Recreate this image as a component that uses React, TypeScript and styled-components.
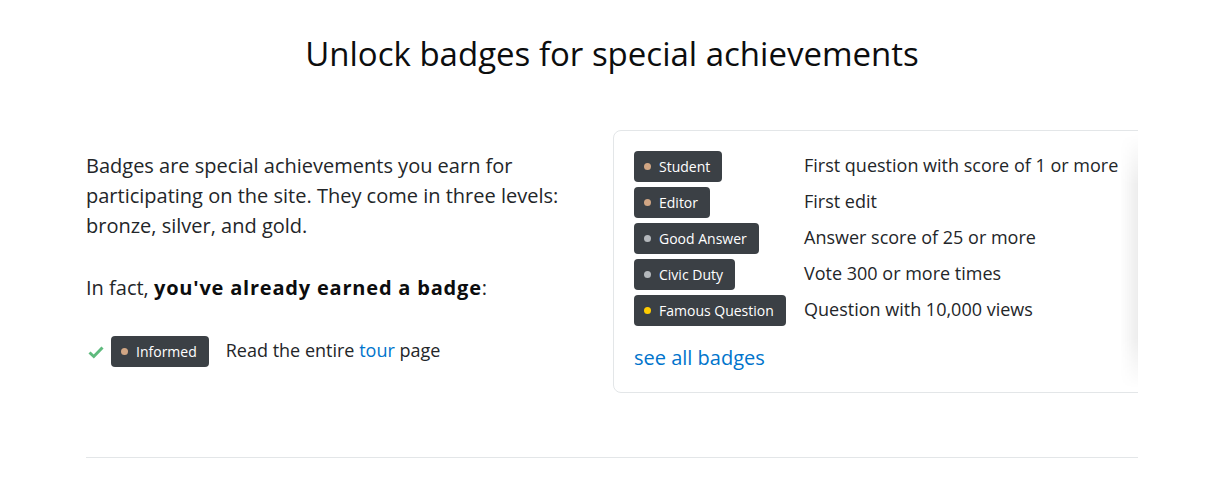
import React from "react";
import styled, { createGlobalStyle } from "styled-components";

const Global = createGlobalStyle`
  html, body { margin: 0; padding: 0; background: #fff; }
  body { font-family: "Open Sans", "Noto Sans", Arial, sans-serif; color: #232629; }
  * { box-sizing: border-box; }
`;

const Page = styled.div`
  width: 1052px;
  margin-left: 86px;
  padding-top: 29px;
`;

const Title = styled.h1`
  margin: 0;
  text-align: center;
  font-size: 33px;
  font-weight: 400;
  line-height: 50px;
  color: #0c0d0e;
`;

const Section = styled.section`
  display: grid;
  grid-template-columns: 527px 1fr;
  align-items: start;
  margin-top: 51px;
  padding-bottom: 64px;
  border-bottom: 1px solid #e3e6e8;
`;

const Intro = styled.div`
  padding: 21px 40px 0 0;
`;

const Para = styled.p`
  margin: 0 0 32px;
  font-size: 20px;
  line-height: 30px;
  color: #232629;
  &:last-of-type { margin-bottom: 33px; }
  b { font-weight: 700; color: #0c0d0e; letter-spacing: 0.8px; }
`;

const EarnedRow = styled.div`
  display: flex;
  align-items: center;
  height: 31px;
  font-size: 18px;
  color: #232629;
`;

const Check = styled.svg`
  width: 16px;
  height: 14px;
  margin-left: 2px;
  margin-right: 7px;
  flex: none;
`;

const Badge = styled.span`
  display: inline-flex;
  align-items: center;
  height: 31px;
  padding: 0 12px 0 10px;
  border-radius: 4px;
  background: #3b4045;
  color: #fff;
  font-size: 14px;
  white-space: nowrap;
  justify-self: start;
`;

const Dot = styled.span<{ $c: string }>`
  width: 7px;
  height: 7px;
  border-radius: 50%;
  background: ${(p) => p.$c};
  margin-right: 8px;
  flex: none;
`;

const EarnedText = styled.span`
  margin-left: 17px;
  padding-bottom: 3px;
`;

const Link = styled.a`
  color: #0074cc;
  text-decoration: none;
`;

const CardWrap = styled.div`
  position: relative;
  overflow: hidden;
`;

const Card = styled.div`
  width: calc(100% + 40px);
  border: 1px solid #e3e6e8;
  border-radius: 8px;
  padding: 20px 20px 21px 20px;
`;

const Fade = styled.div`
  position: absolute;
  top: 4px;
  bottom: 4px;
  right: 0;
  width: 18px;
  background: linear-gradient(to right, rgba(0, 0, 0, 0), rgba(0, 0, 0, 0.07));
  -webkit-mask-image: linear-gradient(to bottom, transparent, #000 20%, #000 80%, transparent);
  mask-image: linear-gradient(to bottom, transparent, #000 20%, #000 80%, transparent);
`;

const List = styled.div`
  display: grid;
  grid-template-columns: 170px 1fr;
  row-gap: 5px;
  align-items: center;
`;

const Desc = styled.span`
  font-size: 18px;
  color: #232629;
  white-space: nowrap;
  padding-bottom: 4px;
`;

const AllLink = styled(Link)`
  display: block;
  margin-top: 19px;
  font-size: 20px;
  line-height: 26px;
`;

const BRONZE = "#d1a684";
const SILVER = "#b4b8bc";
const GOLD = "#ffcc01";

const badges = [
  { name: "Student", c: BRONZE, d: "First question with score of 1 or more" },
  { name: "Editor", c: BRONZE, d: "First edit" },
  { name: "Good Answer", c: SILVER, d: "Answer score of 25 or more" },
  { name: "Civic Duty", c: SILVER, d: "Vote 300 or more times" },
  { name: "Famous Question", c: GOLD, d: "Question with 10,000 views" },
];

export default function App() {
  return (
    <>
      <Global />
      <Page>
        <Title>Unlock badges for special achievements</Title>
        <Section>
          <Intro>
            <Para>
              Badges are special achievements you earn for participating on the site. They come in
              three levels: bronze, silver, and gold.
            </Para>
            <Para>
              In fact, <b>you've already earned a badge</b>:
            </Para>
            <EarnedRow>
              <Check viewBox="0 0 16 14">
                <path d="M1.5 7.5 L5.8 11.5 L14.5 2.5" fill="none" stroke="#5eba7d" strokeWidth="3" />
              </Check>
              <Badge>
                <Dot $c={BRONZE} />
                Informed
              </Badge>
              <EarnedText>
                Read the entire <Link href="#">tour</Link> page
              </EarnedText>
            </EarnedRow>
          </Intro>
          <CardWrap>
            <Card>
              <List>
                {badges.map((b) => (
                  <React.Fragment key={b.name}>
                    <Badge>
                      <Dot $c={b.c} />
                      {b.name}
                    </Badge>
                    <Desc>{b.d}</Desc>
                  </React.Fragment>
                ))}
              </List>
              <AllLink href="#">see all badges</AllLink>
            </Card>
            <Fade />
          </CardWrap>
        </Section>
      </Page>
    </>
  );
}
